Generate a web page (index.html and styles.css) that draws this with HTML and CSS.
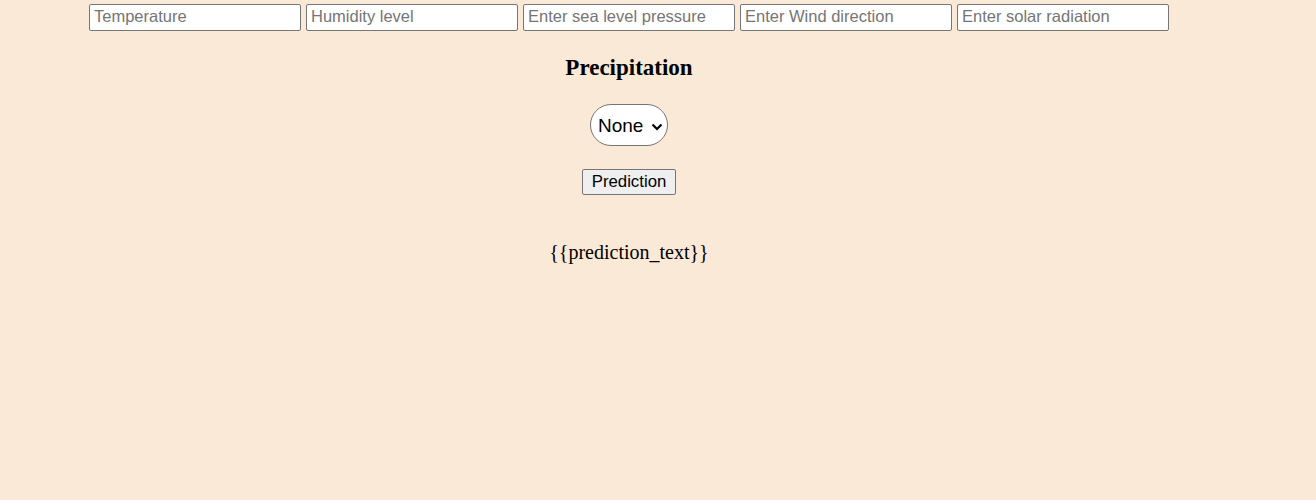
FILE: index.html
```html
<!DOCTYPE html>
<html>
<head>
<meta charset="utf-8">
<link rel="stylesheet" href="styles.css">
</head>
<body>
<div class="wrap">
  <form class="form">
    <div class="inputs">
      <input class="field" type="text" placeholder="Temperature">
      <input class="field" type="text" placeholder="Humidity level">
      <input class="field" type="text" placeholder="Enter sea level pressure">
      <input class="field" type="text" placeholder="Enter Wind direction">
      <input class="field" type="text" placeholder="Enter solar radiation">
    </div>
    <h3 class="title">Precipitation</h3>
    <select class="choice">
      <option>None</option>
      <option>Rain</option>
      <option>Snow</option>
    </select>
    <button class="btn" type="button">Prediction</button>
  </form>
  <p class="result">{{prediction_text}}</p>
</div>
</body>
</html>
```
FILE: styles.css
```css
html, body {
  margin: 0;
  padding: 0;
  background: #fae9d6;
}
body {
  font-family: "Liberation Serif", "Times New Roman", serif;
  color: #000;
}
.wrap {
  width: 1258px;
  display: flex;
  flex-direction: column;
  align-items: center;
  padding-top: 4px;
}
.form {
  display: flex;
  flex-direction: column;
  align-items: center;
}
.inputs {
  display: flex;
  gap: 5px;
}
.field {
  width: 212px;
  height: 27px;
  box-sizing: border-box;
  border: 1px solid #767676;
  border-radius: 2px;
  padding: 0 4px 2px;
  font-family: "Liberation Sans", Arial, sans-serif;
  font-size: 16.5px;
  background: #fff;
  margin: 0;
}
.field::placeholder {
  color: #757575;
}
.title {
  font-size: 23px;
  font-weight: bold;
  margin: 25px 0 0;
  line-height: 24px;
}
.choice {
  appearance: none;
  -webkit-appearance: none;
  margin-top: 24px;
  width: 78px;
  height: 42px;
  box-sizing: border-box;
  border-radius: 21px;
  border: 1px solid #767676;
  background-color: #fff;
  background-image: url("data:image/svg+xml;utf8,<svg xmlns='http://www.w3.org/2000/svg' width='12' height='8' viewBox='0 0 12 8'><path d='M1.5 1.5 L6 6 L10.5 1.5' fill='none' stroke='black' stroke-width='2.2'/></svg>");
  background-repeat: no-repeat;
  background-position: 60px 18px;
  font-family: "Liberation Sans", Arial, sans-serif;
  font-size: 19px;
  padding: 0 0 0 7px;
  color: #000;
}
.btn {
  margin-top: 23px;
  width: 94px;
  height: 26px;
  box-sizing: border-box;
  border: 1px solid #767676;
  border-radius: 2px;
  background: #efefef;
  font-family: "Liberation Sans", Arial, sans-serif;
  font-size: 16.8px;
  color: #000;
  padding: 0;
}
.result {
  margin: 45px 0 0;
  font-size: 20px;
  line-height: 24px;
}
```
